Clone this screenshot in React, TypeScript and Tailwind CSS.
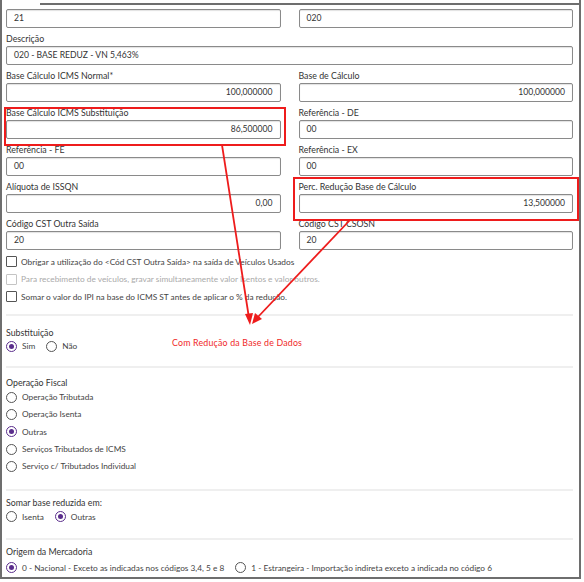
import React from "react";

const font = { fontFamily: "Lato, 'Open Sans', sans-serif" };

function Field({ label, value, right }: { label?: string; value: string; right?: boolean }) {
  return (
    <div className="flex flex-col">
      <div className="h-[18px] pt-[5px] leading-[12px] text-[8.8px] text-[#333] whitespace-nowrap">{label}</div>
      <div
        className={
          "h-[19px] border border-[#8a8a8a] rounded-[2px] bg-white flex items-center px-[7px] text-[8.6px] text-[#333] shadow-[inset_0_1px_1px_rgba(0,0,0,0.12)] " +
          (right ? "justify-end" : "")
        }
      >
        {value}
      </div>
    </div>
  );
}

function Check({ label, disabled }: { label: string; disabled?: boolean }) {
  return (
    <div className="h-[17.5px] flex items-center gap-[4px]">
      <div
        className={
          "w-[11px] h-[11px] rounded-[1px] border bg-white " +
          (disabled ? "border-[#c4c4c4]" : "border-[#555]")
        }
      />
      <span className={"text-[8.3px] whitespace-nowrap " + (disabled ? "text-[#aaa]" : "text-[#444]")}>{label}</span>
    </div>
  );
}

function Radio({ label, checked }: { label: string; checked?: boolean }) {
  return (
    <div className="flex items-center gap-[5px]">
      <div
        className={
          "w-[11px] h-[11px] rounded-full border-[1.3px] flex items-center justify-center bg-white " +
          (checked ? "border-[#5a2d8c]" : "border-[#555]")
        }
      >
        {checked && <div className="w-[5px] h-[5px] rounded-full bg-[#5a2d8c]" />}
      </div>
      <span className="text-[8.3px] text-[#444] whitespace-nowrap">{label}</span>
    </div>
  );
}

function Divider() {
  return <div className="h-[2px] bg-[#efefef]" />;
}

function SectionLabel({ children }: { children: React.ReactNode }) {
  return <div className="text-[8.8px] leading-[12px] text-[#333]">{children}</div>;
}

export default function App() {
  return (
    <div className="w-[584px] h-[582px] bg-white relative overflow-hidden" style={font}>
      <div className="w-[581px] h-[579px] border-l-2 border-r-2 border-b-2 border-[#6e6e6e] px-[4px] pt-[9px]">
        <div className="pr-[2px]">
          <div className="grid grid-cols-2 gap-x-[18px]">
            <div className="h-[19px] border border-[#8a8a8a] rounded-[2px] flex items-center px-[7px] text-[8.6px] text-[#333] shadow-[inset_0_1px_1px_rgba(0,0,0,0.12)]">21</div>
            <div className="h-[19px] border border-[#8a8a8a] rounded-[2px] flex items-center px-[7px] text-[8.6px] text-[#333] shadow-[inset_0_1px_1px_rgba(0,0,0,0.12)]">020</div>
          </div>
          <Field label="Descrição" value="020 - BASE REDUZ - VN 5,463%" />
          <div className="grid grid-cols-2 gap-x-[18px]">
            <Field label="Base Cálculo ICMS Normal*" value="100,000000" right />
            <Field label="Base de Cálculo" value="100,000000" right />
            <Field label="Base Cálculo ICMS Substituição" value="86,500000" right />
            <Field label="Referência - DE" value="00" />
            <Field label="Referência - FE" value="00" />
            <Field label="Referência - EX" value="00" />
            <Field label="Alíquota de ISSQN" value="0,00" right />
            <Field label="Perc. Redução Base de Cálculo" value="13,500000" right />
            <Field label="Código CST Outra Saída" value="20" />
            <Field label="Código CST CSOSN" value="20" />
          </div>
          <div className="mt-[3px] flex flex-col">
            <Check label="Obrigar a utilização do <Cód CST Outra Saída> na saída de Veículos Usados" />
            <Check label="Para recebimento de veículos, gravar simultaneamente valor Isentos e valor outros." disabled />
            <Check label="Somar o valor do IPI na base do ICMS ST antes de aplicar o % da redução." />
          </div>
          <div className="mt-[8px]">
            <Divider />
          </div>
          <div className="pt-[11px] pb-[12px] flex flex-col gap-[1px]">
            <SectionLabel>Substituição</SectionLabel>
            <div className="flex gap-[11px] h-[14px] items-center">
              <Radio label="Sim" checked />
              <Radio label="Não" />
            </div>
          </div>
          <Divider />
          <div className="pt-[9px] pb-[14px] flex flex-col">
            <SectionLabel>Operação Fiscal</SectionLabel>
            <div className="flex flex-col">
              {[
                ["Operação Tributada", false],
                ["Operação Isenta", false],
                ["Outras", true],
                ["Serviços Tributados de ICMS", false],
                ["Serviço c/ Tributados Individual", false],
              ].map(([l, c]) => (
                <div key={l as string} className="h-[17.3px] flex items-center">
                  <Radio label={l as string} checked={c as boolean} />
                </div>
              ))}
            </div>
          </div>
          <Divider />
          <div className="pt-[6px] pb-[14px] flex flex-col gap-[1px]">
            <SectionLabel>Somar base reduzida em:</SectionLabel>
            <div className="flex gap-[11px] h-[14px] items-center">
              <Radio label="Isenta" />
              <Radio label="Outras" checked />
            </div>
          </div>
          <Divider />
          <div className="pt-[6px] flex flex-col gap-[3px]">
            <SectionLabel>Origem da Mercadoria</SectionLabel>
            <div className="flex gap-[11px] h-[14px] items-center">
              <Radio label="0 - Nacional - Exceto as indicadas nos códigos 3,4, 5 e 8" checked />
              <Radio label="1 - Estrangeira - Importação indireta exceto a indicada no código 6" />
            </div>
          </div>
        </div>
      </div>
      {/* fieldset top border */}
      <div className="absolute top-[3px] left-[40px] w-[541px] h-[2px] bg-[#6e6e6e]" />
      {/* annotations */}
      <svg className="absolute inset-0 pointer-events-none" width="584" height="582" viewBox="0 0 584 582">
        <rect x="5" y="108" width="280" height="37" fill="none" stroke="#ee1c1c" strokeWidth="2" />
        <rect x="294" y="178" width="284" height="42" fill="none" stroke="#ee1c1c" strokeWidth="2" />
        <line x1="222" y1="145" x2="249" y2="318" stroke="#ee1c1c" strokeWidth="1.8" />
        <polygon points="250,325 245,314 253,313" fill="#ee1c1c" />
        <line x1="350" y1="220" x2="257" y2="318" stroke="#ee1c1c" strokeWidth="1.8" />
        <polygon points="252,324 255,313 262,319" fill="#ee1c1c" />
      </svg>
      <div className="absolute left-[172px] top-[336px] text-[8.8px] text-[#f02828] whitespace-nowrap tracking-[0.2px]">
        Com Redução da Base de Dados
      </div>
    </div>
  );
}
